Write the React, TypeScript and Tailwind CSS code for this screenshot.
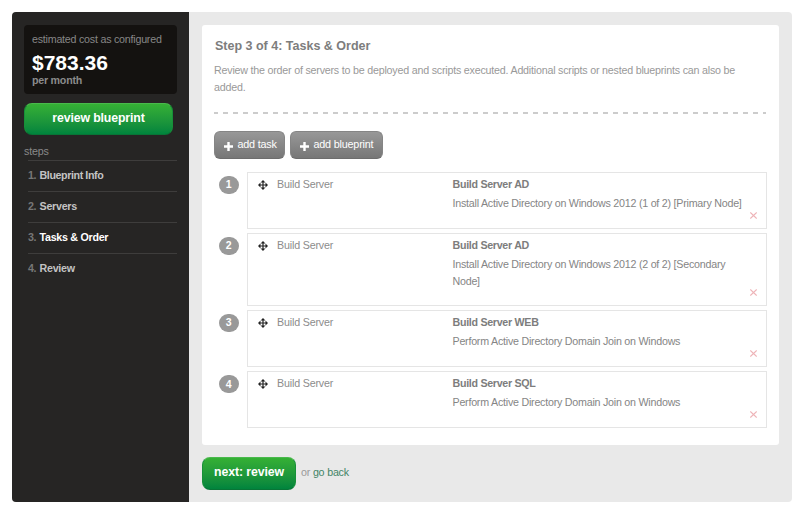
import React from "react";

type Task = { action: string; title: string; lines: string[] };

const tasks: Task[] = [
  { action: "Build Server", title: "Build Server AD", lines: ["Install Active Directory on Windows 2012 (1 of 2) [Primary Node]"] },
  { action: "Build Server", title: "Build Server AD", lines: ["Install Active Directory on Windows 2012 (2 of 2) [Secondary", "Node]"] },
  { action: "Build Server", title: "Build Server WEB", lines: ["Perform Active Directory Domain Join on Windows"] },
  { action: "Build Server", title: "Build Server SQL", lines: ["Perform Active Directory Domain Join on Windows"] },
];

const steps = ["Blueprint Info", "Servers", "Tasks & Order", "Review"];

function MoveIcon() {
  return (
    <svg className="mt-[7px] h-[10px] w-[10px] shrink-0" viewBox="0 0 10 10" fill="#222">
      <path d="M5 0L7.4 2.5H5.6V4.4H7.5V2.6L10 5L7.5 7.4V5.6H5.6V7.5H7.4L5 10L2.6 7.5H4.4V5.6H2.5V7.4L0 5L2.5 2.6V4.4H4.4V2.5H2.6Z" />
    </svg>
  );
}

function PlusIcon() {
  return (
    <svg className="mt-[3px] h-[9px] w-[9px]" viewBox="0 0 9 9" fill="#fff">
      <path d="M3.3 0H5.7V3.3H9V5.7H5.7V9H3.3V5.7H0V3.3H3.3Z" />
    </svg>
  );
}

function GrayButton({ label, className }: { label: string; className: string }) {
  return (
    <button
      className={
        "flex h-[28px] items-center rounded-[6px] border border-[#858585] border-b-[#6d6d6d] bg-linear-to-b from-[#989898] to-[#777777] pl-[9px] text-[10.8px] tracking-[-0.2px] whitespace-nowrap text-white " +
        className
      }
    >
      <PlusIcon />
      <span className="ml-[4.5px]">{label}</span>
    </button>
  );
}

function TaskRow({ task, index }: { task: Task; index: number }) {
  return (
    <li className="flex">
      <div className="w-[33px] shrink-0 pt-[4px] pl-[5px]">
        <div className="flex h-[18px] w-[19.5px] items-center justify-center rounded-full bg-[#999] text-[10.5px] font-bold text-white">{index + 1}</div>
      </div>
      <div className={"flex w-[520px] border border-[#e5e5e5] pl-[10px] " + (task.lines.length > 1 ? "h-[73px]" : "h-[57px]")}>
        <MoveIcon />
        <div className="ml-[9px] w-[175px] pt-[4px] leading-[14px] tracking-[-0.17px] text-[#8c8c8c]">{task.action}</div>
        <div className="flex-1 pt-[4px] text-[#858585]">
          <div className="ml-[0.5px] leading-[14px] font-bold tracking-[-0.3px] text-[#7d7d7d]">{task.title}</div>
          <div className="mt-[4px] ml-[0.5px] leading-[17px] tracking-[-0.235px]">
            {task.lines.map((line) => (
              <div key={line} className="whitespace-nowrap">{line}</div>
            ))}
          </div>
        </div>
        <svg className="mr-[9px] mb-[9px] h-[7px] w-[7px] shrink-0 self-end" viewBox="0 0 7 7" stroke="#eeb4b8" strokeWidth="1.2">
          <path d="M0.3 0.5L6.7 6.5M6.7 0.5L0.3 6.5" />
        </svg>
      </div>
    </li>
  );
}

export default function App() {
  return (
    <div className="h-[509px] w-[800px] bg-white pt-[12px] pl-[11.5px] font-['Liberation_Sans',Arial,sans-serif] text-[10.7px]">
      <div className="flex h-[490px] w-[780px] overflow-hidden rounded-[4px] bg-[#e9e9e9]">
        <aside className="w-[177.5px] shrink-0 bg-[#262524] pt-[13px] pr-[12.5px] pl-[12.5px]">
          <div className="h-[69px] rounded-[4px] bg-[#141210] pt-[7px] pl-[8px]">
            <div className="leading-[14px] tracking-[-0.23px] whitespace-nowrap text-[#878787]">estimated cost as configured</div>
            <div className="mt-[6px] text-[21px] leading-[22px] font-bold text-white">$783.36</div>
            <div className="leading-[13px] font-bold tracking-[-0.25px] text-[#8b8b8b]">per month</div>
          </div>
          <button className="mt-[8.5px] h-[32px] w-[149px] rounded-[8px] border border-t-[#49b94c] border-x-[#179039] border-b-[#087536] bg-linear-to-b from-[#35b034] to-[#00843d] pb-px text-center text-[12.3px] font-bold tracking-[-0.12px] text-white">
            review blueprint
          </button>
          <div className="mt-[10px] leading-[13px] tracking-[-0.2px] text-[#898989]">steps</div>
          <ol className="mt-[2.5px] ml-[4px]">
            {steps.map((step, i) => (
              <li key={step} className="flex h-[31px] border-t border-[#3e3d3c] pt-[7px] leading-[14px] font-bold tracking-[-0.4px] whitespace-nowrap">
                <span className="w-[11.5px] text-[#777]">{i + 1}.</span>
                <span className={i === 2 ? "tracking-[-0.27px] text-white" : i === 0 ? "text-[#c3c3c3]" : "tracking-[-0.25px] text-[#c3c3c3]"}>{step}</span>
              </li>
            ))}
          </ol>
        </aside>
        <main className="flex-1 pt-[13px] pl-[13px]">
          <section className="h-[419.5px] w-[577px] rounded-[3px] bg-white pt-[13px] pl-[12px]">
            <h1 className="ml-[1px] text-[12.5px] leading-[16px] font-bold text-[#7d7d7d]">Step 3 of 4: Tasks &amp; Order</h1>
            <p className="mt-[8px] leading-[16.5px] tracking-[-0.21px] whitespace-nowrap text-[#999]">
              Review the order of servers to be deployed and scripts executed. Additional scripts or nested blueprints can also be
              <br />
              added.
            </p>
            <div className="mt-[16.5px] h-[2px] w-[552px] bg-[repeating-linear-gradient(90deg,#ccc_0,#ccc_5px,transparent_5px,transparent_10px)] bg-[position:-1px_0]" />
            <div className="mt-[17px] flex gap-[5px]">
              <GrayButton label="add task" className="w-[71px]" />
              <GrayButton label="add blueprint" className="w-[93px]" />
            </div>
            <ul className="mt-[13px] flex flex-col gap-[4.3px]">
              {tasks.map((task, i) => (
                <TaskRow key={i} task={task} index={i} />
              ))}
            </ul>
          </section>
          <div className="mt-[12.5px] flex">
            <button className="h-[33px] w-[94px] rounded-[8px] border border-t-[#49b94c] border-x-[#179039] border-b-[#087536] bg-linear-to-b from-[#35b034] to-[#00843d] pb-[2px] text-[12.3px] font-bold tracking-[-0.1px] whitespace-nowrap text-white">
              next: review
            </button>
            <div className="ml-[5px] pt-[8px] leading-[14px] tracking-[-0.2px] text-[#999]">
              or <a className="text-[#438567]">go back</a>
            </div>
          </div>
        </main>
      </div>
    </div>
  );
}
